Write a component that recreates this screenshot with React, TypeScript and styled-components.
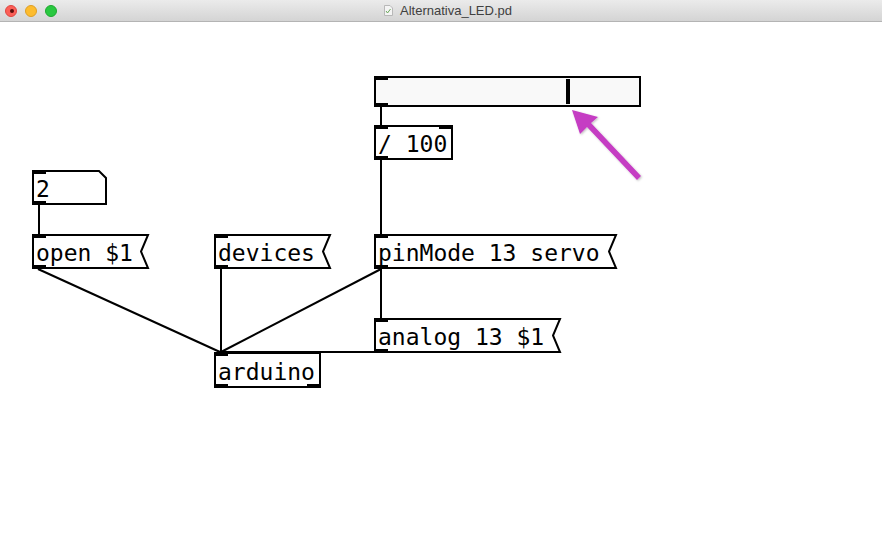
import { FC, ReactNode } from "react";
import styled, { createGlobalStyle } from "styled-components";

const GlobalStyle = createGlobalStyle`
  html, body {
    margin: 0;
    padding: 0;
    background: #ffffff;
  }
  #root {
    width: 882px;
    height: 535px;
  }
`;

const Window = styled.div`
  display: flex;
  flex-direction: column;
  width: 882px;
  height: 535px;
  overflow: hidden;
  background: #ffffff;
`;

const TitleBar = styled.div`
  display: grid;
  grid-template-columns: 1fr auto 1fr;
  align-items: center;
  height: 21px;
  flex-shrink: 0;
  background: linear-gradient(#ebebeb, #d4d4d4);
  border-bottom: 1px solid #b4b4b4;
`;

const Lights = styled.div`
  display: flex;
  gap: 8px;
  padding-left: 5px;
`;

const Light = styled.span<{ $color: string; $border: string }>`
  position: relative;
  width: 12px;
  height: 12px;
  border-radius: 50%;
  box-sizing: border-box;
  background: ${(p) => p.$color};
  border: 0.5px solid ${(p) => p.$border};
`;

const EditedDot = styled.span`
  position: absolute;
  left: 3.5px;
  top: 3.5px;
  width: 4px;
  height: 4px;
  border-radius: 50%;
  background: #5a0d0a;
`;

const Title = styled.div`
  display: flex;
  align-items: center;
  gap: 7px;
  margin-left: 14px;
  font-family: "Liberation Sans", Arial, sans-serif;
  font-size: 13px;
  color: #404040;
`;

const Canvas = styled.div`
  position: relative;
  flex: 1;
  background: #ffffff;
  font-family: "DejaVu Sans Mono", "Liberation Mono", monospace;
  font-size: 23px;
  color: #000000;
`;

// every node sits at its place on the patch canvas
const Node = styled.div<{ $x: number; $y: number; $w: number; $h: number }>`
  position: absolute;
  left: ${(p) => p.$x}px;
  top: ${(p) => p.$y}px;
  width: ${(p) => p.$w}px;
  height: ${(p) => p.$h}px;
  box-sizing: border-box;
  display: flex;
  align-items: center;
`;

const ObjectBox = styled(Node)`
  border: 2px solid #000;
  background: #fff;
`;

const Label = styled.span`
  position: relative;
  padding: 4px 0 0 4px;
  white-space: pre;
  line-height: 1;
`;

const Outline = styled.svg`
  position: absolute;
  left: 0;
  top: 0;
  overflow: visible;
`;

const Port = styled.span<{ $bottom?: boolean; $right?: boolean }>`
  position: absolute;
  width: 14px;
  height: 4px;
  background: #000;
  ${(p) => (p.$bottom ? "bottom: 0;" : "top: 0;")}
  ${(p) => (p.$right ? "right: 0;" : "left: 0;")}
`;

const SliderBox = styled(Node)`
  border: 2px solid #000;
  background: #f9f9f9;
`;

const Knob = styled.span`
  position: absolute;
  top: 1px;
  width: 4px;
  height: 25px;
  background: #000;
`;

const Overlay = styled.svg`
  position: absolute;
  left: 0;
  top: 0;
  pointer-events: none;
`;

type Box = { x: number; y: number; w: number; h: number };

const Msg: FC<Box & { text: string }> = ({ x, y, w, h, text }) => (
  <Node $x={x} $y={y} $w={w} $h={h}>
    <Outline width={w} height={h}>
      <polygon
        points={`1,1 ${w},1 ${w - 7},${h / 2} ${w},${h - 1} 1,${h - 1}`}
        fill="#fff"
        stroke="#000"
        strokeWidth={2}
      />
    </Outline>
    <Port />
    <Port $bottom />
    <Label>{text}</Label>
  </Node>
);

const NumBox: FC<Box & { text: string }> = ({ x, y, w, h, text }) => (
  <Node $x={x} $y={y} $w={w} $h={h}>
    <Outline width={w} height={h}>
      <polygon
        points={`1,1 ${w - 8},1 ${w - 1},8 ${w - 1},${h - 1} 1,${h - 1}`}
        fill="#fff"
        stroke="#000"
        strokeWidth={2}
      />
    </Outline>
    <Port />
    <Port $bottom />
    <Label>{text}</Label>
  </Node>
);

const Obj: FC<Box & { children: ReactNode; inlets?: number; outlets?: number }> = ({
  x,
  y,
  w,
  h,
  children,
  inlets = 1,
  outlets = 1,
}) => (
  <ObjectBox $x={x} $y={y} $w={w} $h={h}>
    <Port style={{ left: -2, top: -2 }} />
    {inlets > 1 && <Port $right style={{ right: -2, top: -2 }} />}
    <Port $bottom style={{ left: -2, bottom: -2 }} />
    {outlets > 1 && <Port $bottom $right style={{ right: -2, bottom: -2 }} />}
    <Label style={{ left: -2 }}>{children}</Label>
  </ObjectBox>
);

// screen y minus the 22px title bar
const wires: [number, number, number, number][] = [
  [381, 84, 381, 103],
  [381, 138, 381, 296],
  [39, 183, 39, 212],
  [38, 247, 220, 330],
  [221, 247, 221, 330],
  [381, 247, 221, 330],
  [376, 330, 221, 330],
];

const DocIcon: FC = () => (
  <svg width="9" height="11" viewBox="0 0 9 11">
    <path d="M0.5 0.5h5.5l2.5 2.5v7.5h-8z" fill="#f4f4f4" stroke="#b8b8b8" />
    <path d="M2 6l1.5 2 3-4" fill="none" stroke="#6aa85a" strokeWidth="1" />
  </svg>
);

const App: FC = () => {
  return (
    <>
      <GlobalStyle />
      <Window>
        <TitleBar>
          <Lights>
            <Light $color="#fc5f57" $border="#df4640">
              <EditedDot />
            </Light>
            <Light $color="#fdbc2e" $border="#de9f24" />
            <Light $color="#29c840" $border="#1ea82f" />
          </Lights>
          <Title>
            <DocIcon />
            <span>Alternativa_LED.pd</span>
          </Title>
          <div />
        </TitleBar>
        <Canvas>
          <Overlay width={882} height={513}>
            {wires.map(([x1, y1, x2, y2], i) => (
              <line key={i} x1={x1} y1={y1} x2={x2} y2={y2} stroke="#000" strokeWidth={2} />
            ))}
          </Overlay>

          <SliderBox $x={374} $y={54} $w={267} $h={31}>
            <Port style={{ left: -2, top: -2 }} />
            <Port $bottom style={{ left: -2, bottom: -2 }} />
            <Knob style={{ left: 190 }} />
          </SliderBox>

          <Obj x={374} y={103} w={79} h={35} inlets={2}>
            / 100
          </Obj>

          <NumBox x={32} y={148} w={75} h={35} text="2" />
          <Msg x={32} y={212} w={116} h={35} text="open $1" />
          <Msg x={214} y={212} w={116} h={35} text="devices" />
          <Msg x={374} y={212} w={242} h={35} text="pinMode 13 servo" />
          <Msg x={374} y={296} w={186} h={35} text="analog 13 $1" />

          <Obj x={214} y={330} w={107} h={36} outlets={2}>
            arduino
          </Obj>

          <Overlay width={882} height={513}>
            <defs>
              <filter id="shade" x="-20%" y="-20%" width="140%" height="140%">
                <feDropShadow dx="1" dy="1" stdDeviation="1" floodColor="#000" floodOpacity="0.25" />
              </filter>
            </defs>
            <polygon
              points="572,88 598,95 591,101 641,154 637,158 587,105 580,112"
              fill="#c53cc3"
              filter="url(#shade)"
            />
          </Overlay>
        </Canvas>
      </Window>
    </>
  );
};

export default App;
